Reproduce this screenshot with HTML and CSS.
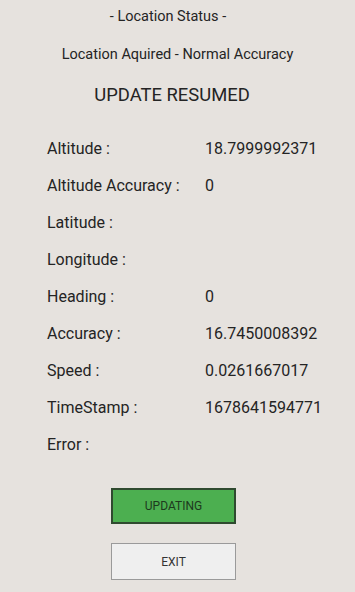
FILE: index.html
```html
<!DOCTYPE html>
<html>
<head>
<meta charset="utf-8">
<link rel="stylesheet" href="styles.css">
</head>
<body>
<div class="screen">
  <div class="title">- Location Status -</div>
  <div class="subtitle">Location Aquired - Normal Accuracy</div>
  <div class="header">UPDATE RESUMED</div>
  <div class="rows">
    <div class="row"><span class="label">Altitude :</span><span class="value">18.7999992371</span></div>
    <div class="row"><span class="label">Altitude Accuracy :</span><span class="value">0</span></div>
    <div class="row"><span class="label">Latitude :</span><span class="value"></span></div>
    <div class="row"><span class="label">Longitude :</span><span class="value"></span></div>
    <div class="row"><span class="label">Heading :</span><span class="value">0</span></div>
    <div class="row"><span class="label">Accuracy :</span><span class="value">16.7450008392</span></div>
    <div class="row"><span class="label">Speed :</span><span class="value">0.0261667017</span></div>
    <div class="row"><span class="label">TimeStamp :</span><span class="value">1678641594771</span></div>
    <div class="row"><span class="label">Error :</span><span class="value"></span></div>
  </div>
  <div class="buttons">
    <div class="btn btn-green">UPDATING</div>
    <div class="btn btn-light">EXIT</div>
  </div>
</div>
</body>
</html>
```
FILE: styles.css
```css
html, body {
  margin: 0;
  padding: 0;
  background: #e6e2de;
}
.screen {
  width: 355px;
  height: 592px;
  font-family: Roboto, "Liberation Sans", sans-serif;
  color: #242424;
  display: flex;
  flex-direction: column;
}
.title {
  text-align: center;
  font-size: 14.5px;
  line-height: 20px;
  margin-top: 7px;
  padding-right: 19px;
}
.subtitle {
  text-align: center;
  font-size: 14.5px;
  line-height: 20px;
  margin-top: 18px;
}
.header {
  text-align: center;
  font-size: 18.4px;
  line-height: 24px;
  margin-top: 18px;
  padding-right: 11px;
}
.rows {
  display: flex;
  flex-direction: column;
  margin-top: 23px;
  padding-left: 47px;
}
.row {
  display: flex;
  height: 37px;
  align-items: center;
  font-size: 16px;
}
.label {
  width: 158px;
}
.buttons {
  display: flex;
  flex-direction: column;
  align-items: flex-start;
  padding-left: 111px;
  margin-top: 25px;
  gap: 19px;
}
.btn {
  box-sizing: border-box;
  width: 125px;
  height: 36px;
  display: flex;
  align-items: center;
  justify-content: center;
  font-size: 12px;
}
.btn-green {
  background: #4caf50;
  border: 2px solid #2f4a2f;
  color: #1d3a1d;
}
.btn-light {
  background: #efefef;
  border: 1px solid #9a9a9a;
  color: #333;
  height: 37px;
}
```
